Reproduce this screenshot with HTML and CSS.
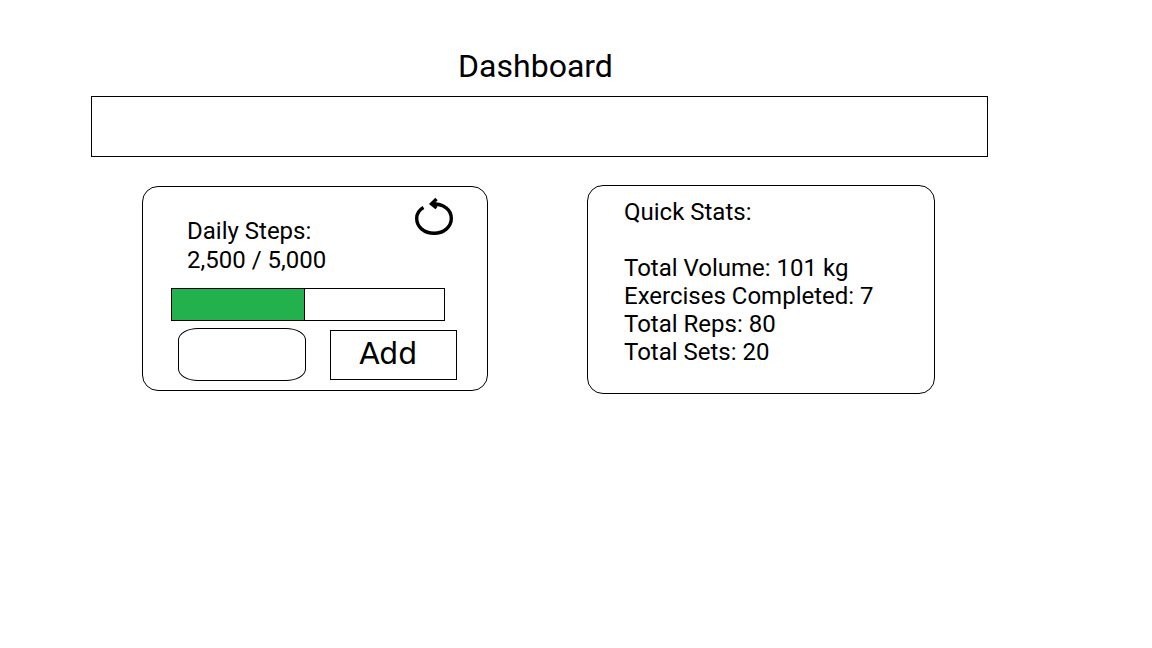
FILE: index.html
```html
<!DOCTYPE html>
<html lang="en">
<head>
<meta charset="utf-8">
<meta name="viewport" content="width=device-width, initial-scale=1">
<title>Dashboard</title>
<link rel="stylesheet" href="styles.css">
</head>
<body>
<main class="page">
  <h1 class="title">Dashboard</h1>
  <nav class="banner" aria-label="Main"></nav>
  <div class="cards">
    <section class="card steps">
      <header class="steps-head">
        <div class="steps-summary">
          <h2 class="steps-text">Daily Steps:</h2>
          <p class="steps-text">2,500 / 5,000</p>
        </div>
        <button class="reset" type="button" aria-label="Reset steps">
          <svg width="40" height="40" viewBox="0 0 40 40" fill="none" stroke="#000" stroke-width="3.4" aria-hidden="true">
            <path d="M10.500 10.500C6 13 3.700 17 3.700 21.500C3.700 30 11.500 36.300 21 36.300S38.300 30 38.300 21.500C38.300 12.500 31 6.800 18.500 6.800"/>
            <path d="M23.500 2L18.500 6.800L23.500 11"/>
          </svg>
        </button>
      </header>
      <div class="progress" role="progressbar" aria-label="Daily steps" aria-valuenow="2500" aria-valuemin="0" aria-valuemax="5000">
        <div class="progress-fill" style="width: 49%"></div>
      </div>
      <form class="entry">
        <input class="entry-input" type="text" aria-label="Steps to add">
        <button class="entry-add" type="button">Add</button>
      </form>
    </section>
    <section class="card stats">
      <h2 class="stats-title">Quick Stats:</h2>
      <ul class="stats-list">
        <li>Total Volume: 101 kg</li>
        <li>Exercises Completed: 7</li>
        <li>Total Reps: 80</li>
        <li>Total Sets: 20</li>
      </ul>
    </section>
  </div>
</main>
</body>
</html>
```

FILE: styles.css
```css
* {
  box-sizing: border-box;
}

body {
  margin: 0;
  background: #fff;
  color: #000;
  font-family: Roboto, sans-serif;
  font-size: 24px;
}

h1, h2, p, ul {
  margin: 0;
  padding: 0;
  font-weight: 400;
}

.page {
  padding: 46px 164px 46px 91px;
}

.title {
  padding-right: 8px;
  font-size: 32px;
  line-height: 40px;
  text-align: center;
}

.banner {
  min-height: 61px;
  margin-top: 10px;
  border: 1px solid #000;
}

.cards {
  display: grid;
  grid-template-columns: 346fr 348fr;
  align-items: start;
  gap: 99px;
  margin-top: 28px;
  padding: 0 53px 0 51px;
}

.card {
  border: 1px solid #000;
  border-radius: 16px;
}

.steps {
  margin-top: 1px;
  padding: 10px 30px 9px 28px;
}

.steps-head {
  display: flex;
  justify-content: space-between;
  align-items: flex-start;
  padding: 0 4px 0 16px;
}

.steps-summary {
  padding-top: 19px;
}

.steps-text {
  padding-top: 1px;
  font-size: 24px;
  line-height: 28px;
}

.reset {
  display: flex;
  padding: 0;
  border: 0;
  background: none;
  cursor: pointer;
}

.progress {
  height: 33px;
  margin: 14px 12px 0 0;
  border: 1px solid #000;
}

.progress-fill {
  height: 100%;
  border-right: 1px solid #000;
  background: #22b14c;
}

.entry {
  display: grid;
  grid-template-columns: 1fr 1fr;
  align-items: center;
  gap: 24px;
  margin-top: 7px;
  padding-left: 7px;
}

.entry-input,
.entry-add {
  width: 100%;
  min-width: 0;
  border: 1px solid #000;
  background: #fff;
  color: #000;
}

.entry-input {
  height: 53px;
  padding: 0 12px;
  border-radius: 20px / 12px;
  font: 24px Roboto, sans-serif;
}

.entry-add {
  height: 50px;
  padding: 0 10px 2px 0;
  font: 30px "DejaVu Sans", sans-serif;
  cursor: pointer;
}

.stats {
  padding: 12px 36px 27px;
  line-height: 28px;
}

.stats-title {
  font-size: 24px;
}

.stats-list {
  padding-top: 28px;
  list-style: none;
}
```
